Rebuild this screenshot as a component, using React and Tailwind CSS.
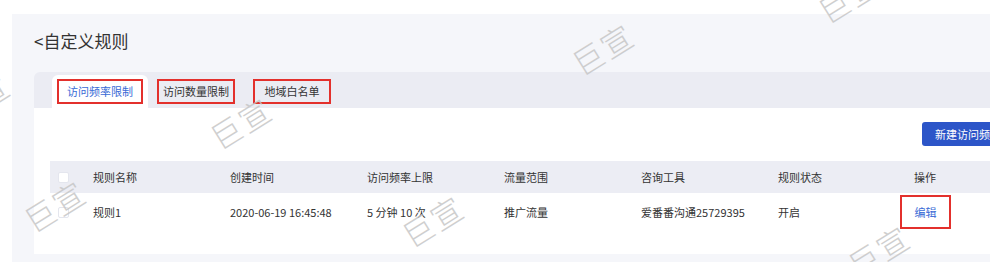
import React from 'react'

const font = { fontFamily: '"Noto Sans CJK SC", "Noto Sans", sans-serif' }

const cols = ['规则名称', '创建时间', '访问频率上限', '流量范围', '咨询工具', '规则状态', '操作']
const row = ['规则1', '2020-06-19 16:45:48', '5 分钟 10 次', '推广流量', '爱番番沟通25729395', '开启']

const marks = [
  [54, 205],
  [240, 122],
  [432, 220],
  [602, 48],
  [848, -4],
  [878, 250],
  [-22, 98],
]

function Watermark({ x, y }) {
  return (
    <div
      className="pointer-events-none absolute w-[80px] h-[40px] -ml-[40px] -mt-[20px] flex items-center justify-center text-[31px] font-light leading-none text-[#c4c4c4] opacity-80 -rotate-[32deg] tracking-[2px]"
      style={{ left: x, top: y }}
    >
      巨宣
    </div>
  )
}

function Check() {
  return <span className="block w-[11px] h-[11px] bg-white border border-[#e4e6ee] rounded-[2px]" />
}

function Tab({ label, active }) {
  return (
    <div
      className={`h-[33px] flex items-center justify-center ${
        active ? 'w-[96px] bg-white rounded-t-[6px]' : ''
      }`}
    >
      <span
        className={`border-2 border-[#e3302c] h-[25px] flex items-center justify-center text-[11px] ${
          active ? 'w-[86px] text-[#3a6bd6]' : 'w-[78px] text-[#333]'
        }`}
      >
        {label}
      </span>
    </div>
  )
}

export default function App() {
  return (
    <div className="relative w-[990px] h-[262px] overflow-hidden bg-white pt-[14px] pl-[12px]" style={font}>
      <div className="h-full bg-[#f5f6fa] pl-[22px] flex flex-col">
        <div className="h-[58px] flex items-center text-[17px] text-[#333] pb-[4px]">&lt;自定义规则</div>
        <div className="h-[36px] bg-[#ebecf3] rounded-tl-[6px] flex items-end pl-[18px] gap-[9px]">
          <Tab label="访问频率限制" active />
          <Tab label="访问数量限制" />
          <div className="ml-[9px]">
            <Tab label="地域白名单" />
          </div>
        </div>
        <div className="h-[146px] bg-white pl-[16px] flex flex-col overflow-hidden">
          <div className="pt-[14px] h-[38px] pl-[872px]">
            <div className="w-[120px] h-[24px] bg-[#2c55c8] rounded-[3px] text-white text-[11px] flex items-center pl-[13px] whitespace-nowrap">
              新建访问频率限制
            </div>
          </div>
          <div className="mt-[15px] h-[32px] w-[1040px] shrink-0 bg-[#ecedf4] flex items-center text-[11px] text-[#333]">
            <div className="w-[43px] shrink-0 pl-[8px]"><Check /></div>
            {cols.map((c, i) => (
              <div key={c} className={`${i === 5 ? 'w-[136px]' : 'w-[137px]'} shrink-0 whitespace-nowrap`}>{c}</div>
            ))}
          </div>
          <div className="h-[38px] w-[1040px] shrink-0 flex items-center text-[11px] text-[#333]">
            <div className="w-[43px] shrink-0 pl-[8px]"><Check /></div>
            {row.map((c, i) => (
              <div key={i} className={`${i === 5 ? 'w-[136px]' : 'w-[137px]'} shrink-0 whitespace-nowrap`}>{c}</div>
            ))}
            <div className="-ml-[14px] shrink-0 w-[51px] h-[34px] border-2 border-[#e3302c] flex items-center justify-center text-[#3a6bd6]">
              编辑
            </div>
          </div>
        </div>
      </div>
      {marks.map(([x, y], i) => (
        <Watermark key={i} x={x} y={y} />
      ))}
    </div>
  )
}
